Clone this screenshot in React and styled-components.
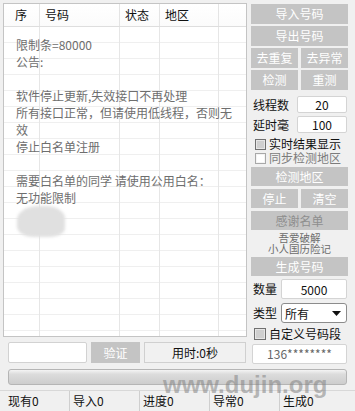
import React from 'react';
import styled, { createGlobalStyle } from 'styled-components';

const GlobalStyle = createGlobalStyle`
  html, body {
    margin: 0;
    padding: 0;
    background: #f0f0f0;
  }
  body {
    font-family: "Noto Sans CJK SC", "Microsoft YaHei", sans-serif;
    font-size: 12px;
    color: #1a1a1a;
  }
  * {
    box-sizing: border-box;
  }
`;

const noticeLines = [
  '限制条=80000',
  '公告:',
  '',
  '软件停止更新,失效接口不再处理',
  '所有接口正常，但请使用低线程，否则无',
  '效',
  '停止白名单注册',
  '',
  '需要白名单的同学 请使用公用白名：',
  '无功能限制'
];

const columns = [
  { label: '序', width: 36, pad: 11 },
  { label: '号码', width: 80, pad: 5 },
  { label: '状态', width: 40, pad: 5 },
  { label: '地区', width: 59, pad: 5 }
];

const stats = ['现有0', '导入0', '进度0', '导常0', '生成0'];

const App = () => (
  <>
    <GlobalStyle />
    <Window>
      <Main>
        <LeftCol>
          <List>
            <ListHeader>
              {columns.map((col) => (
                <HeadCell key={col.label} $w={col.width} $pad={col.pad}>
                  {col.label}
                </HeadCell>
              ))}
              <HeadFill />
            </ListHeader>
            <ListBody>
              {noticeLines.map((line, i) => (
                <NoticeLine key={i}>{line}</NoticeLine>
              ))}
              <Smudge />
            </ListBody>
          </List>
          <VerifyRow>
            <CodeInput />
            <VerifyButton>验证</VerifyButton>
            <TimePanel>用时:0秒</TimePanel>
          </VerifyRow>
        </LeftCol>

        <Side>
          <SideButton $h={20}>导入号码</SideButton>
          <SideButton $h={20} $mt={2}>导出号码</SideButton>
          <ButtonPair $mt={2}>
            <SideButton $h={20}>去重复</SideButton>
            <SideButton $h={20}>去异常</SideButton>
          </ButtonPair>
          <ButtonPair $mt={2}>
            <SideButton $h={20}>检测</SideButton>
            <SideButton $h={20}>重测</SideButton>
          </ButtonPair>

          <FieldRow $h={17} $mt={6}>
            <FieldLabel>线程数</FieldLabel>
            <FieldBox $w={50}>20</FieldBox>
          </FieldRow>
          <FieldRow $h={17} $mt={3}>
            <FieldLabel>延时毫</FieldLabel>
            <FieldBox $w={50}>100</FieldBox>
          </FieldRow>

          <CheckRow $mt={4}>
            <CheckBox $shaded />
            <CheckText>实时结果显示</CheckText>
          </CheckRow>
          <CheckRow>
            <CheckBox />
            <CheckText $dim>同步检测地区</CheckText>
          </CheckRow>

          <SideButton $h={19} $mt={2}>检测地区</SideButton>
          <ButtonPair $mt={3}>
            <SideButton $h={19}>停止</SideButton>
            <SideButton $h={19}>清空</SideButton>
          </ButtonPair>
          <SideButton $h={19} $mt={3} $muted>感谢名单</SideButton>

          <Credits>
            <CreditLine>吾爱破解</CreditLine>
            <CreditLine>小人国历险记</CreditLine>
          </Credits>

          <SideButton $h={19} $mt={3}>生成号码</SideButton>

          <FieldRow $h={20} $mt={3}>
            <FieldLabel>数量</FieldLabel>
            <FieldBox $w={66}>5000</FieldBox>
          </FieldRow>
          <FieldRow $h={20} $mt={4}>
            <FieldLabel>类型</FieldLabel>
            <Select>
              所有
              <svg width="9" height="5" viewBox="0 0 9 5">
                <path d="M0 0 H9 L4.5 5 Z" fill="#111" />
              </svg>
            </Select>
          </FieldRow>

          <CheckRow $mt={4} $pad={3}>
            <CheckBox $shaded $size={12} />
            <CheckText>自定义号码段</CheckText>
          </CheckRow>

          <PrefixBox>136********</PrefixBox>
        </Side>
      </Main>

      <Progress />

      <StatusBar>
        {stats.map((s, i) => (
          <StatusCell key={s} $first={i === 0}>
            {s}
          </StatusCell>
        ))}
      </StatusBar>

      <Watermark>www.dujin.org</Watermark>
    </Window>
  </>
);

const Window = styled.div`
  position: relative;
  width: 355px;
  height: 411px;
  padding: 3px 0 0 3px;
  background: #f0f0f0;
  display: flex;
  flex-direction: column;
  overflow: hidden;
`;

const Main = styled.div`
  display: flex;
  align-items: flex-start;
`;

const LeftCol = styled.div`
  width: 244px;
  display: flex;
  flex-direction: column;
`;

const List = styled.div`
  height: 334px;
  border: 1px solid #c4c4c4;
  background: #fff;
  display: flex;
  flex-direction: column;
  overflow: hidden;
`;

const ListHeader = styled.div`
  display: flex;
  height: 23px;
  flex-shrink: 0;
  border-bottom: 1px solid #dedede;
  background: linear-gradient(#ffffff, #fbfbfb);
`;

const HeadCell = styled.div`
  width: ${(p) => p.$w}px;
  padding-left: ${(p) => p.$pad}px;
  border-right: 1px solid #e4e4e4;
  line-height: 22px;
  font-size: 12px;
  color: #111;
`;

const HeadFill = styled.div`
  flex: 1;
`;

const ListBody = styled.div`
  flex: 1;
  padding: 9px 0 0 12px;
  background-image:
    linear-gradient(
      to right,
      transparent 35px,
      #e6e6e6 35px 36px,
      transparent 36px 115px,
      #e6e6e6 115px 116px,
      transparent 116px 155px,
      #e6e6e6 155px 156px,
      transparent 156px 214px,
      #e6e6e6 214px 215px,
      transparent 215px
    ),
    repeating-linear-gradient(
      to bottom,
      transparent 0 15px,
      #efefef 15px 16px
    );
`;

const NoticeLine = styled.div`
  height: 17px;
  line-height: 17px;
  font-size: 12px;
  color: #6e6e6e;
  white-space: nowrap;
`;

const Smudge = styled.div`
  width: 48px;
  height: 31px;
  margin: 0 0 0 1px;
  background: #e0e0e0;
  border-radius: 45% 40% 30% 35%;
  filter: blur(1.5px);
`;

const VerifyRow = styled.div`
  display: flex;
  gap: 4px;
  height: 21px;
  margin-top: 5px;
  padding-left: 5px;
`;

const CodeInput = styled.div`
  width: 79px;
  background: #fff;
  border: 1px solid #d2d2d2;
  border-radius: 2px;
`;

const VerifyButton = styled.div`
  width: 49px;
  background: #c4c4c4;
  color: #fff;
  text-align: center;
  line-height: 21px;
  font-size: 12px;
`;

const TimePanel = styled.div`
  width: 102px;
  border: 1px solid #d0d0d0;
  background: #f1f1f1;
  text-align: center;
  line-height: 19px;
  font-size: 12px;
  color: #111;
`;

const Side = styled.div`
  width: 97px;
  margin: 1px 0 0 4px;
  display: flex;
  flex-direction: column;
`;

const SideButton = styled.div`
  height: ${(p) => p.$h}px;
  margin-top: ${(p) => p.$mt || 0}px;
  background: #c4c4c4;
  color: ${(p) => (p.$muted ? '#8e8e8e' : '#fff')};
  text-align: center;
  line-height: ${(p) => p.$h}px;
  font-size: 12px;
`;

const ButtonPair = styled.div`
  display: grid;
  grid-template-columns: 1fr 1fr;
  gap: 3px;
  margin-top: ${(p) => p.$mt || 0}px;
`;

const FieldRow = styled.div`
  display: flex;
  align-items: center;
  height: ${(p) => p.$h}px;
  margin-top: ${(p) => p.$mt || 0}px;
  padding: 0 1px 0 2px;
`;

const FieldLabel = styled.span`
  font-size: 12px;
  line-height: 14px;
  color: #111;
`;

const FieldBox = styled.div`
  width: ${(p) => p.$w}px;
  height: 100%;
  margin-left: auto;
  background: #fff;
  border: 1px solid #d4d4d4;
  border-radius: 2px;
  display: flex;
  align-items: center;
  justify-content: center;
  font-size: 12px;
  color: #111;
`;

const Select = styled.div`
  width: 66px;
  height: 100%;
  margin-left: auto;
  background: #fff;
  border: 1px solid #8c8c8c;
  border-radius: 3px;
  display: flex;
  align-items: center;
  justify-content: space-between;
  padding: 0 5px 0 3px;
  font-size: 12px;
  color: #111;
`;

const CheckRow = styled.div`
  display: flex;
  align-items: center;
  height: 14px;
  margin-top: ${(p) => p.$mt || 0}px;
  padding-left: ${(p) => (p.$pad !== undefined ? p.$pad : 4)}px;
`;

const CheckBox = styled.span`
  width: ${(p) => p.$size || 11}px;
  height: ${(p) => p.$size || 11}px;
  flex-shrink: 0;
  border: 1px solid ${(p) => (p.$shaded ? '#707070' : '#a8a8a8')};
  background: ${(p) => (p.$shaded ? '#cfcfcf' : '#fff')};
  box-shadow: inset 0 0 0 1px ${(p) => (p.$shaded ? '#e6e6e6' : '#f4f4f4')};
`;

const CheckText = styled.span`
  margin-left: 3px;
  font-size: 12px;
  line-height: 14px;
  color: ${(p) => (p.$dim ? '#7c7c7c' : '#111')};
  white-space: nowrap;
`;

const Credits = styled.div`
  margin-top: 2px;
  display: flex;
  flex-direction: column;
  align-items: center;
  gap: 0;
`;

const CreditLine = styled.div`
  height: 11px;
  font-size: 10.5px;
  line-height: 11px;
  color: #6c6c6c;
  white-space: nowrap;
`;

const PrefixBox = styled.div`
  height: 20px;
  margin: 3px 1px 0 1px;
  background: #fff;
  border: 1px solid #d4d4d4;
  border-radius: 2px;
  text-align: center;
  line-height: 18px;
  font-size: 12px;
  color: #666;
`;

const Progress = styled.div`
  width: 339px;
  height: 17px;
  margin: 5px 0 0 5px;
  border: 1px solid #b5b5b5;
  border-radius: 3px;
  background: linear-gradient(#f4f4f4 0, #dcdcdc 30%, #cdcdcd 100%);
`;

const StatusBar = styled.div`
  display: flex;
  height: 21px;
  margin: 5px 0 0 -3px;
  border-top: 1px solid #d8d8d8;
`;

const StatusCell = styled.div`
  width: ${(p) => (p.$first ? 69 : 70)}px;
  padding-left: ${(p) => (p.$first ? 8 : 3)}px;
  border-left: ${(p) => (p.$first ? 'none' : '1px solid #cfcfcf')};
  line-height: 20px;
  font-size: 12px;
  color: #111;
`;

const Watermark = styled.div`
  position: absolute;
  left: 163px;
  top: 375px;
  font-family: "Liberation Sans", Arial, sans-serif;
  font-weight: bold;
  font-size: 24px;
  line-height: 20px;
  color: rgba(130, 130, 130, 0.55);
  pointer-events: none;
  white-space: nowrap;
`;

export default App;
